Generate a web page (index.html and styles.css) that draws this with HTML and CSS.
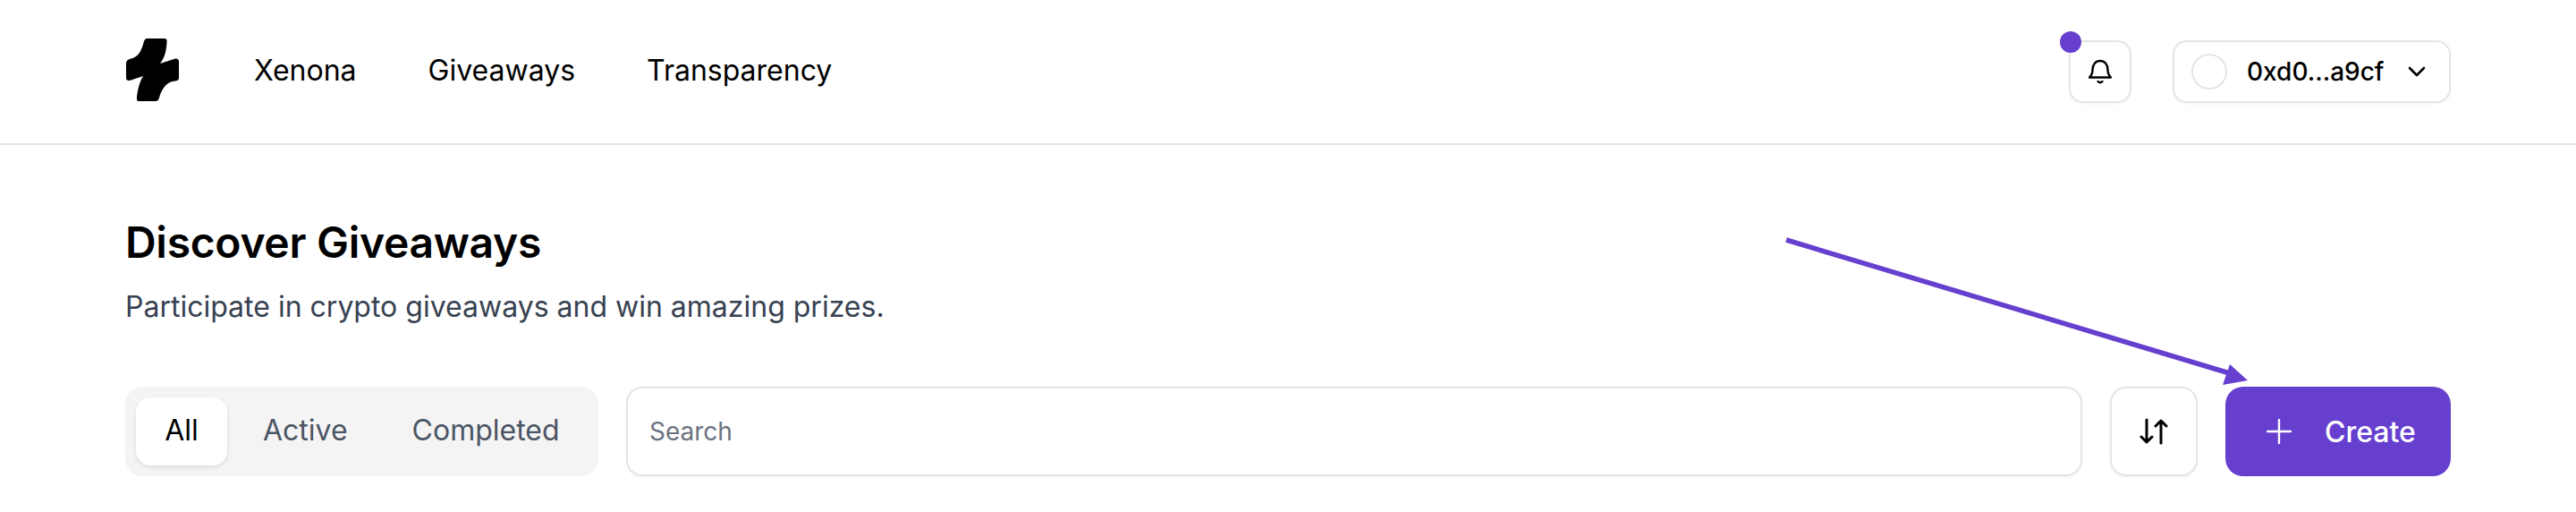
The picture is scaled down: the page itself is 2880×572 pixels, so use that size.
FILE: index.html
```html
<!DOCTYPE html>
<html lang="en">
<head>
    <meta charset="UTF-8">
    <title>Discover Giveaways</title>
    <link rel="stylesheet" href="styles.css">
</head>
<body>

<header class="topbar">
    <div class="topbar-left">
        <svg class="logo" viewBox="0 0 59 70" aria-label="Logo">
            <path d="M23 0 L43 0 Q46 0 45.500 4 C45 16 42 23 38 28 L55 22.500 Q59 22 59 26 L59 44 Q59 47 55 47.500 C45 48 40 56 37 66 Q36 70 33 70 L14 70 Q11.500 70 12 66 C13 55 16 47 19 42 L4 47 Q0 47.500 0 44 L0 28 Q0 24 4 23 C14 21 17 14 20 3 Q21 0 23 0 Z" fill="#000"/>
        </svg>
        <nav class="nav">
            <a href="#">Xenona</a>
            <a href="#">Giveaways</a>
            <a href="#">Transparency</a>
        </nav>
    </div>
    <div class="topbar-right">
        <button class="icon-btn bell-btn">
            <span class="dot"></span>
            <svg class="bell" viewBox="0 0 28 28" fill="none" stroke="#000" stroke-width="2.400" stroke-linecap="round" stroke-linejoin="round">
                <path d="M5.500 12 C5.500 6 9 2 14 2 C19 2 22.500 6 22.500 12 C22.500 16 24 18.500 26 20.500 L2 20.500 C4 18.500 5.500 16 5.500 12 Z"/>
                <path d="M11.500 25 C13 26.500 15 26.500 16.500 25"/>
            </svg>
        </button>
        <button class="wallet">
            <span class="avatar"></span>
            <span class="address">0xd0...a9cf</span>
            <svg class="chevron" viewBox="0 0 20 12" fill="none" stroke="#000" stroke-width="2.600" stroke-linecap="round" stroke-linejoin="round">
                <path d="M2 2 L10 10 L18 2"/>
            </svg>
        </button>
    </div>
</header>

<main class="content">
    <h1>Discover Giveaways</h1>
    <p class="subtitle">Participate in crypto giveaways and win amazing prizes.</p>

    <div class="toolbar">
        <div class="tabs">
            <button class="tab tab-active">All</button>
            <button class="tab">Active</button>
            <button class="tab">Completed</button>
        </div>
        <input class="search" type="text" placeholder="Search">
        <button class="icon-btn sort-btn">
            <svg class="sort" viewBox="0 0 32 30" fill="none" stroke="#000" stroke-width="3" stroke-linecap="round" stroke-linejoin="round">
                <path d="M8 2 L8 27 M2 21 L8 27 L14 21"/>
                <path d="M24 28 L24 3 M18 9 L24 3 L30 9"/>
            </svg>
        </button>
        <button class="create">
            <svg class="plus" viewBox="0 0 28 28" fill="none" stroke="#fff" stroke-width="2.400" stroke-linecap="round">
                <path d="M14 1 L14 27 M1 14 L27 14"/>
            </svg>
            <span>Create</span>
        </button>
    </div>
</main>

<!-- arrow drawn over the page -->
<svg class="arrow" viewBox="0 0 2880 572" fill="none">
    <path d="M1997 268 L2496 418" stroke="#673fcf" stroke-width="5.500"/>
    <path d="M2493 407 L2513 425 L2485 430 Z" fill="#673fcf"/>
</svg>

</body>
</html>
```

FILE: styles.css
```css
body {
    margin: 0;
    background: #fff;
    color: #000;
    font-family: Inter, "Liberation Sans", sans-serif;
    height: 572px;
    overflow: hidden;
    position: relative;
}
button {
    font-family: inherit;
    cursor: pointer;
}

/* top bar */
.topbar {
    display: flex;
    justify-content: space-between;
    align-items: center;
    height: 160px;
    padding: 0 140px;
    border-bottom: 2px solid #e5e5e5;
}
.topbar-left {
    display: flex;
    align-items: center;
    margin-bottom: 4px;
}
.logo {
    width: 59px;
    height: 70px;
    margin-left: 1px;
}
.nav {
    display: flex;
    gap: 80px;
    margin-left: 84px;
}
.nav a {
    color: #000;
    font-size: 32px;
    text-decoration: none;
}
.topbar-right {
    display: flex;
    align-items: center;
    gap: 46px;
}
.icon-btn {
    display: flex;
    align-items: center;
    justify-content: center;
    background: #fff;
    border: 2px solid #e5e5e5;
    padding: 0;
    box-shadow: 0 1px 3px rgba(0, 0, 0, 0.06);
}
.bell-btn {
    width: 70px;
    height: 70px;
    border-radius: 16px;
    position: relative;
}
.dot {
    position: absolute;
    left: -12px;
    top: -12px;
    width: 24px;
    height: 24px;
    border-radius: 50%;
    background: #673fcf;
}
.bell {
    width: 28px;
    height: 28px;
}
.wallet {
    display: flex;
    align-items: center;
    width: 311px;
    height: 70px;
    padding: 0 0 0 19px;
    background: #fff;
    border: 2px solid #e5e5e5;
    border-radius: 16px;
    box-shadow: 0 1px 3px rgba(0, 0, 0, 0.06);
    color: #000;
}
.avatar {
    width: 36px;
    height: 36px;
    border: 2px solid #e5e5e5;
    border-radius: 50%;
}
.address {
    margin-left: 22px;
    font-size: 28px;
    font-weight: 500;
}
.chevron {
    width: 20px;
    height: 12px;
    margin-left: 26px;
}

/* main */
.content {
    padding: 0 140px;
}
h1 {
    margin: 0;
    padding-top: 78px;
    font-size: 48px;
    line-height: 62px;
    font-weight: 600;
    letter-spacing: -0.3px;
}
.subtitle {
    margin: 19px 0 0;
    font-size: 32px;
    line-height: 44px;
    color: #374151;
}
.toolbar {
    display: flex;
    align-items: stretch;
    height: 100px;
    margin-top: 67px;
}
.tabs {
    display: flex;
    align-items: center;
    width: 529px;
    box-sizing: border-box;
    padding: 0 12px;
    background: #f4f4f5;
    border-radius: 20px;
    margin-right: 31px;
}
.tab {
    flex: none;
    height: 76px;
    padding: 0 36px 4px;
    background: none;
    border: 0;
    border-radius: 16px;
    color: #4b5563;
    font-size: 32px;
}
.tab-active {
    width: 102px;
    margin-right: 4px;
    padding: 0 0 4px;
    background: #fff;
    color: #000;
    box-shadow: 0 2px 5px rgba(0, 0, 0, 0.1);
}
.search {
    flex: 1;
    min-width: 0;
    padding: 0 24px;
    background: #fff;
    border: 2px solid #e5e5e5;
    border-radius: 18px;
    box-shadow: 0 1px 3px rgba(0, 0, 0, 0.06);
    font-family: inherit;
    font-size: 28px;
}
.search::placeholder {
    color: #6b7280;
}
.sort-btn {
    width: 98px;
    margin-left: 31px;
    border-radius: 18px;
}
.sort {
    width: 32px;
    height: 30px;
}
.create {
    display: flex;
    align-items: center;
    gap: 37px;
    width: 252px;
    margin-left: 31px;
    padding: 0 0 0 46px;
    background: #673fcf;
    border: 0;
    border-radius: 20px;
    color: #fff;
    font-size: 32px;
    font-weight: 550;
}
.plus {
    width: 28px;
    height: 28px;
}
.arrow {
    position: absolute;
    left: 0;
    top: 0;
    width: 2880px;
    height: 572px;
    pointer-events: none;
}
```
